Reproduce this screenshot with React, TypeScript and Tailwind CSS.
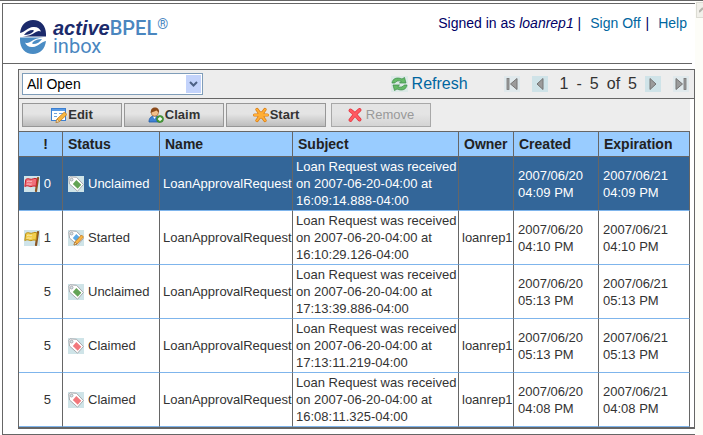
import type { ReactNode } from "react";

type Flag = "red" | "yellow" | null;

interface Task {
  flag: Flag;
  priority: number;
  status: "Unclaimed" | "Started" | "Claimed";
  subject: string[];
  owner: string;
  created: string[];
  expiration: string[];
  selected?: boolean;
}

const received = "Loan Request was received";
const day = "on 2007-06-20-04:00 at";

const tasks: Task[] = [
  { flag: "red", priority: 0, status: "Unclaimed", subject: [received, day, "16:09:14.888-04:00"], owner: "", created: ["2007/06/20", "04:09 PM"], expiration: ["2007/06/21", "04:09 PM"], selected: true },
  { flag: "yellow", priority: 1, status: "Started", subject: [received, day, "16:10:29.126-04:00"], owner: "loanrep1", created: ["2007/06/20", "04:10 PM"], expiration: ["2007/06/21", "04:10 PM"] },
  { flag: null, priority: 5, status: "Unclaimed", subject: [received, day, "17:13:39.886-04:00"], owner: "", created: ["2007/06/20", "05:13 PM"], expiration: ["2007/06/21", "05:13 PM"] },
  { flag: null, priority: 5, status: "Claimed", subject: [received, day, "17:13:11.219-04:00"], owner: "loanrep1", created: ["2007/06/20", "05:13 PM"], expiration: ["2007/06/21", "05:13 PM"] },
  { flag: null, priority: 5, status: "Claimed", subject: [received, day, "16:08:11.325-04:00"], owner: "loanrep1", created: ["2007/06/20", "04:08 PM"], expiration: ["2007/06/21", "04:08 PM"] },
];

function LogoMark() {
  const half = "M0 14C1 6 6 1 13 1c8 0 13 6 13 14v2.500H2.500C8 17 12 16 15 13.500c2-1.500 4-2 6-1-1-3-4-5-8-4.500C8 8.500 5 13 0 14z";
  const swirl = "M4 16c2-3 5-5 9-5 1 0 1 1 0 2-2 2-5 3-9 3z";
  return (
    <svg width="26" height="36" viewBox="0 0 26 36" aria-hidden="true">
      <g fill="#1b2a6b">
        <path d={half} />
        <path d={swirl} />
      </g>
      <g fill="#4a8cc4" transform="rotate(180 13 18)">
        <path d={half} />
        <path d={swirl} />
      </g>
    </svg>
  );
}

function FlagIcon({ color }: { color: "red" | "yellow" }) {
  const fill = color === "red" ? "#f0707a" : "#f2cf4e";
  const edge = color === "red" ? "#c9202c" : "#b98d10";
  return (
    <svg width="16" height="16" viewBox="0 0 16 16" className="shrink-0 bg-[#cfe4ea]" aria-hidden="true">
      <path d="M14 2 12 15" stroke="#8a5523" strokeWidth="2.200" strokeLinecap="round" />
      <path d="M13 3C10 1.200 8.500 4 6 3.200 4.500 2.500 3 2.500 1.800 3.500L.8 10.500c1.700-1 3.200-.8 4.700 0 2 .8 3.500-1.400 6.500-.2z" fill={fill} stroke={edge} />
      <path d="M3 5.500c2-1 3 .5 5-.3M2.700 8.300c2-1 3 .5 5-.3" stroke="#fff" strokeOpacity=".55" fill="none" />
    </svg>
  );
}

function TagIcon({ status }: { status: Task["status"] }) {
  const fill = status === "Unclaimed" ? "#63a355" : status === "Started" ? "#5aa9e6" : "#f2787c";
  return (
    <svg width="16" height="16" viewBox="0 0 16 16" className="shrink-0 bg-[#cfe4e8]" aria-hidden="true">
      <path d="M.8 2 2 .8 8.500 1.300 15.400 8.500 9.500 15.200 1.500 8z" fill="#fff" stroke="#a9a9ad" strokeLinejoin="round" />
      <path d="M8.300 4 13.300 8.700 9.700 12.700 4.800 8z" fill={fill} />
      <circle cx="3.600" cy="3.600" r="1.400" fill="#d6e6ea" stroke="#9a9a9e" strokeWidth=".8" />
      {status === "Started" && (
        <>
          <path d="M13.500 5 15.500 7 9 14 6 15l.8-3z" fill="#f8b545" stroke="#c77a1d" strokeWidth=".8" />
          <path d="M6.800 12 9 14l-3 1z" fill="#f6dfb8" stroke="#8a5a1c" strokeWidth=".5" />
        </>
      )}
    </svg>
  );
}

function EditIcon() {
  return (
    <svg width="16" height="16" viewBox="0 0 16 16" aria-hidden="true">
      <rect x=".5" y="1.500" width="14" height="12" fill="#fff" stroke="#3c7fd0" />
      <path d="M1 2h13v2H1z" fill="#5a9be6" />
      <path d="M3 6.500h3M3 9.500h3M8 6.500h4" stroke="#6ea3dc" />
      <path d="M13.500 5 16 7.500 8.500 14.500 5 15.500l1-3.500z" fill="#f9b63e" stroke="#c47b1c" strokeWidth=".8" />
      <path d="M6 12l2.500 2.500L5 15.500z" fill="#f8e3bd" stroke="#9a6a2a" strokeWidth=".5" />
    </svg>
  );
}

function ClaimIcon() {
  return (
    <svg width="16" height="16" viewBox="0 0 16 16" aria-hidden="true">
      <path d="M1 15c0-4 2-6 5.500-6S12 11 12 15z" fill="#3f83d6" stroke="#2058a4" strokeWidth=".8" />
      <path d="M5 9.500 6.500 12 8 9.500z" fill="#fff" />
      <circle cx="6.800" cy="5.500" r="3.700" fill="#f3bf8a" stroke="#93551f" strokeWidth=".6" />
      <path d="M2.800 6C2.500 2 4.500.500 7 .5s4.500 1.700 4 5.200C10 4.500 9 3.800 8.200 3.500 6.500 5 4.500 4.500 2.800 6z" fill="#8b4a1a" />
      <circle cx="12" cy="12" r="3.500" fill="#4da13e" stroke="#2c7425" strokeWidth=".6" />
      <path d="M12 10v4M10 12h4" stroke="#fff" strokeWidth="1.300" />
    </svg>
  );
}

function StartIcon() {
  const spokes = "M8 8 4 2.500M8 8l4-5.500M8 8H1.600M8 8h6.400M8 8l-4 5.500M8 8l4 5.500";
  return (
    <svg width="16" height="16" viewBox="0 0 16 16" aria-hidden="true">
      <path d={spokes} stroke="#d97a10" strokeWidth="3.200" strokeLinecap="round" />
      <circle cx="8" cy="8" r="3.600" fill="#d97a10" />
      <path d={spokes} stroke="#ffae35" strokeWidth="2" strokeLinecap="round" />
      <circle cx="8" cy="8" r="2.900" fill="#ffae35" />
    </svg>
  );
}

function RemoveIcon() {
  const cross = "M2.500 2.500Q6 5 11.500 11.500M11.500 2Q7 5.500 2.500 12";
  return (
    <svg width="14" height="14" viewBox="0 0 14 14" aria-hidden="true">
      <path d={cross} stroke="#e2323c" strokeWidth="3.800" strokeLinecap="round" fill="none" />
      <path d={cross} stroke="#ff5a62" strokeWidth="2.400" strokeLinecap="round" fill="none" />
    </svg>
  );
}

function RefreshIcon() {
  const arrow = "M1 7C1.500 2.500 6 .8 11 3l2.500-1.500L15 7H8.500l1.700-1.700C7.500 4.300 5 5 3.800 7z";
  return (
    <svg width="17" height="16" viewBox="0 0 17 16" aria-hidden="true">
      <rect width="17" height="16" fill="#dce9e6" />
      <g fill="#66ba68" stroke="#378a46" strokeWidth=".7">
        <path d={arrow} />
        <path d={arrow} transform="rotate(180 8.500 8)" />
      </g>
    </svg>
  );
}

function PagerIcon({ dir, edge }: { dir: "left" | "right"; edge?: boolean }) {
  return (
    <svg width="16" height="16" viewBox="0 0 16 16" aria-hidden="true">
      <rect width="16" height="16" fill={edge ? "#e0e9ec" : "#cfe3e8"} />
      <g transform={dir === "right" ? "translate(16 0) scale(-1 1)" : undefined}>
        {edge && <rect x="3" y="2.500" width="2" height="11" fill="#a0a0a0" stroke="#747474" strokeWidth=".8" />}
        <path d={edge ? "M13 2.500v11L6.500 8z" : "M11 2.500v11L5 8z"} fill="#9b9b9b" stroke="#747474" strokeLinejoin="round" />
      </g>
    </svg>
  );
}

function ToolButton({ icon, children, disabled }: { icon: ReactNode; children: ReactNode; disabled?: boolean }) {
  return (
    <button
      type="button"
      disabled={disabled}
      className="flex h-6 w-[100px] items-center justify-center gap-px border border-[#979797] bg-linear-to-b from-[#e4e4e4] from-45% to-[#bdbdbd] text-[13px] font-bold text-[#333] disabled:gap-1 disabled:border-[#a8a8a8] disabled:to-[#d4d4d4] disabled:font-normal disabled:text-[#999]"
    >
      {icon}
      {children}
    </button>
  );
}

function HeadCell({ children }: { children: ReactNode }) {
  return <th scope="col" className="border-y border-r border-[#666] pl-[5px] text-left">{children}</th>;
}

function Row({ task }: { task: Task }) {
  const cell = "border-r border-r-[#666] border-b border-b-[#7fb5ec] py-px";
  return (
    <tr className={task.selected ? "bg-[#336699] text-white" : "bg-white text-[#333]"}>
      <td className={cell}>
        <div className="flex items-center justify-end gap-1 pr-[11px]">
          {task.flag && <FlagIcon color={task.flag} />}
          {task.priority}
        </div>
      </td>
      <td className={cell}>
        <div className="flex items-center gap-1 pl-[5px]">
          <TagIcon status={task.status} />
          {task.status}
        </div>
      </td>
      <td className={`${cell} pl-[3px] whitespace-nowrap`}>LoanApprovalRequest</td>
      <td className={`${cell} pl-[3px] whitespace-nowrap`}>{task.subject.map((t) => <div key={t}>{t}</div>)}</td>
      <td className={`${cell} pl-[3px]`}>{task.owner}</td>
      <td className={`${cell} pl-1`}>{task.created.map((t) => <div key={t}>{t}</div>)}</td>
      <td className={`${cell} pl-1`}>{task.expiration.map((t) => <div key={t}>{t}</div>)}</td>
    </tr>
  );
}

export default function App() {
  return (
    <div className="flex border-t border-[#666] bg-white font-['Liberation_Sans',Arial,sans-serif]">
      <div className="mt-[2px] ml-[2px] min-w-0 flex-1 border-y border-l border-[#666] pb-[5px]">
        <header className="mr-[3px] flex h-[60px] items-start justify-between border-b border-[#666] pl-[17px]">
          <div className="flex gap-[7px] pt-[15px]">
            <LogoMark />
            <h1 className="font-['Roboto',sans-serif] text-[20px] leading-[18px] font-medium text-[#4a86bf]">
              <span className="flex">
                <span className="font-['Liberation_Sans',sans-serif] font-bold text-[#1b2a6b] italic">active</span>
                <span>BPEL</span>
                <span className="text-[14px] leading-[10px] font-normal">®</span>
              </span>
              <span className="block font-normal">inbox</span>
            </h1>
          </div>
          <nav className="flex pt-[9px] pr-[5px] text-[14px] leading-[20px] text-[#000066]">
            <span>Signed in as <i>loanrep1</i> |</span>
            <a href="#signoff" className="ml-[9px] text-[#0066a0]">Sign Off</a>
            <span className="ml-[5px]">|</span>
            <a href="#help" className="ml-[9px] text-[#0066a0]">Help</a>
          </nav>
        </header>

        <main className="mt-[5px] ml-[15px] border-x border-t border-b-2 border-[#666] bg-white">
          <div className="flex h-[29px] items-center border-b border-[#666] bg-[#ededed] pr-[5px] pl-[3px]">
            <div className="relative">
              <select aria-label="Task filter" className="block h-[22px] w-[181px] appearance-none border border-[#7f9db9] bg-white pl-1 text-[14px] text-black">
                <option>All Open</option>
              </select>
              <span className="pointer-events-none absolute inset-y-[2px] right-[2px] flex w-[15px] items-center justify-center bg-[#c3d3fb]">
                <svg width="9" height="6" viewBox="0 0 9 6" aria-hidden="true">
                  <path d="M1 1l3.500 3.500L8 1" fill="none" stroke="#4d6185" strokeWidth="2" />
                </svg>
              </span>
            </div>
            <div className="ml-auto flex items-center text-[16px] text-[#333]">
              <a href="#refresh" className="mr-9 flex items-center gap-1 text-[#0066a0]">
                <RefreshIcon />
                Refresh
              </a>
              <button type="button" aria-label="First page"><PagerIcon dir="left" edge /></button>
              <button type="button" aria-label="Previous page" className="ml-3"><PagerIcon dir="left" /></button>
              <span className="mr-2 ml-3 flex gap-2"><span>1</span><span>-</span><span>5</span><span>of</span><span>5</span></span>
              <button type="button" aria-label="Next page"><PagerIcon dir="right" /></button>
              <button type="button" aria-label="Last page" className="ml-3"><PagerIcon dir="right" edge /></button>
            </div>
          </div>

          <div className="mr-1 flex gap-[2px] bg-[#ededed] py-1 pl-[3px]">
            <ToolButton icon={<EditIcon />}>Edit</ToolButton>
            <ToolButton icon={<ClaimIcon />}>Claim</ToolButton>
            <ToolButton icon={<StartIcon />}>Start</ToolButton>
            <span className="w-px" />
            <ToolButton icon={<RemoveIcon />} disabled>Remove</ToolButton>
          </div>

          <div className="pr-1">
            <table className="w-full table-fixed border-separate border-spacing-0 text-[13px] leading-[17px]">
              <colgroup>
                <col className="w-[44px]" />
                <col className="w-[97px]" />
                <col className="w-[133px]" />
                <col className="w-[166px]" />
                <col className="w-[55px]" />
                <col className="w-[85px]" />
                <col />
              </colgroup>
              <thead>
                <tr className="h-[26px] bg-[#99ccff] text-[14px] text-[#222]">
                  <th scope="col" className="border-y border-r border-[#666] pr-[14px] text-right">!</th>
                  <HeadCell>Status</HeadCell>
                  <HeadCell>Name</HeadCell>
                  <HeadCell>Subject</HeadCell>
                  <HeadCell>Owner</HeadCell>
                  <HeadCell>Created</HeadCell>
                  <HeadCell>Expiration</HeadCell>
                </tr>
              </thead>
              <tbody>
                {tasks.map((task, i) => <Row key={i} task={task} />)}
              </tbody>
            </table>
          </div>
        </main>
      </div>
      <div className="w-2 shrink-0 bg-[#fdfdf8]">
        <div className="mt-px ml-px flex h-4 items-center justify-end border border-r-0 border-[#dcdcd4] bg-[#f1f0ea]">
          <svg width="4" height="6" viewBox="0 0 4 6" aria-hidden="true">
            <path d="M0 5l4-4" stroke="#b5b5ae" strokeWidth="2" />
          </svg>
        </div>
      </div>
    </div>
  );
}
